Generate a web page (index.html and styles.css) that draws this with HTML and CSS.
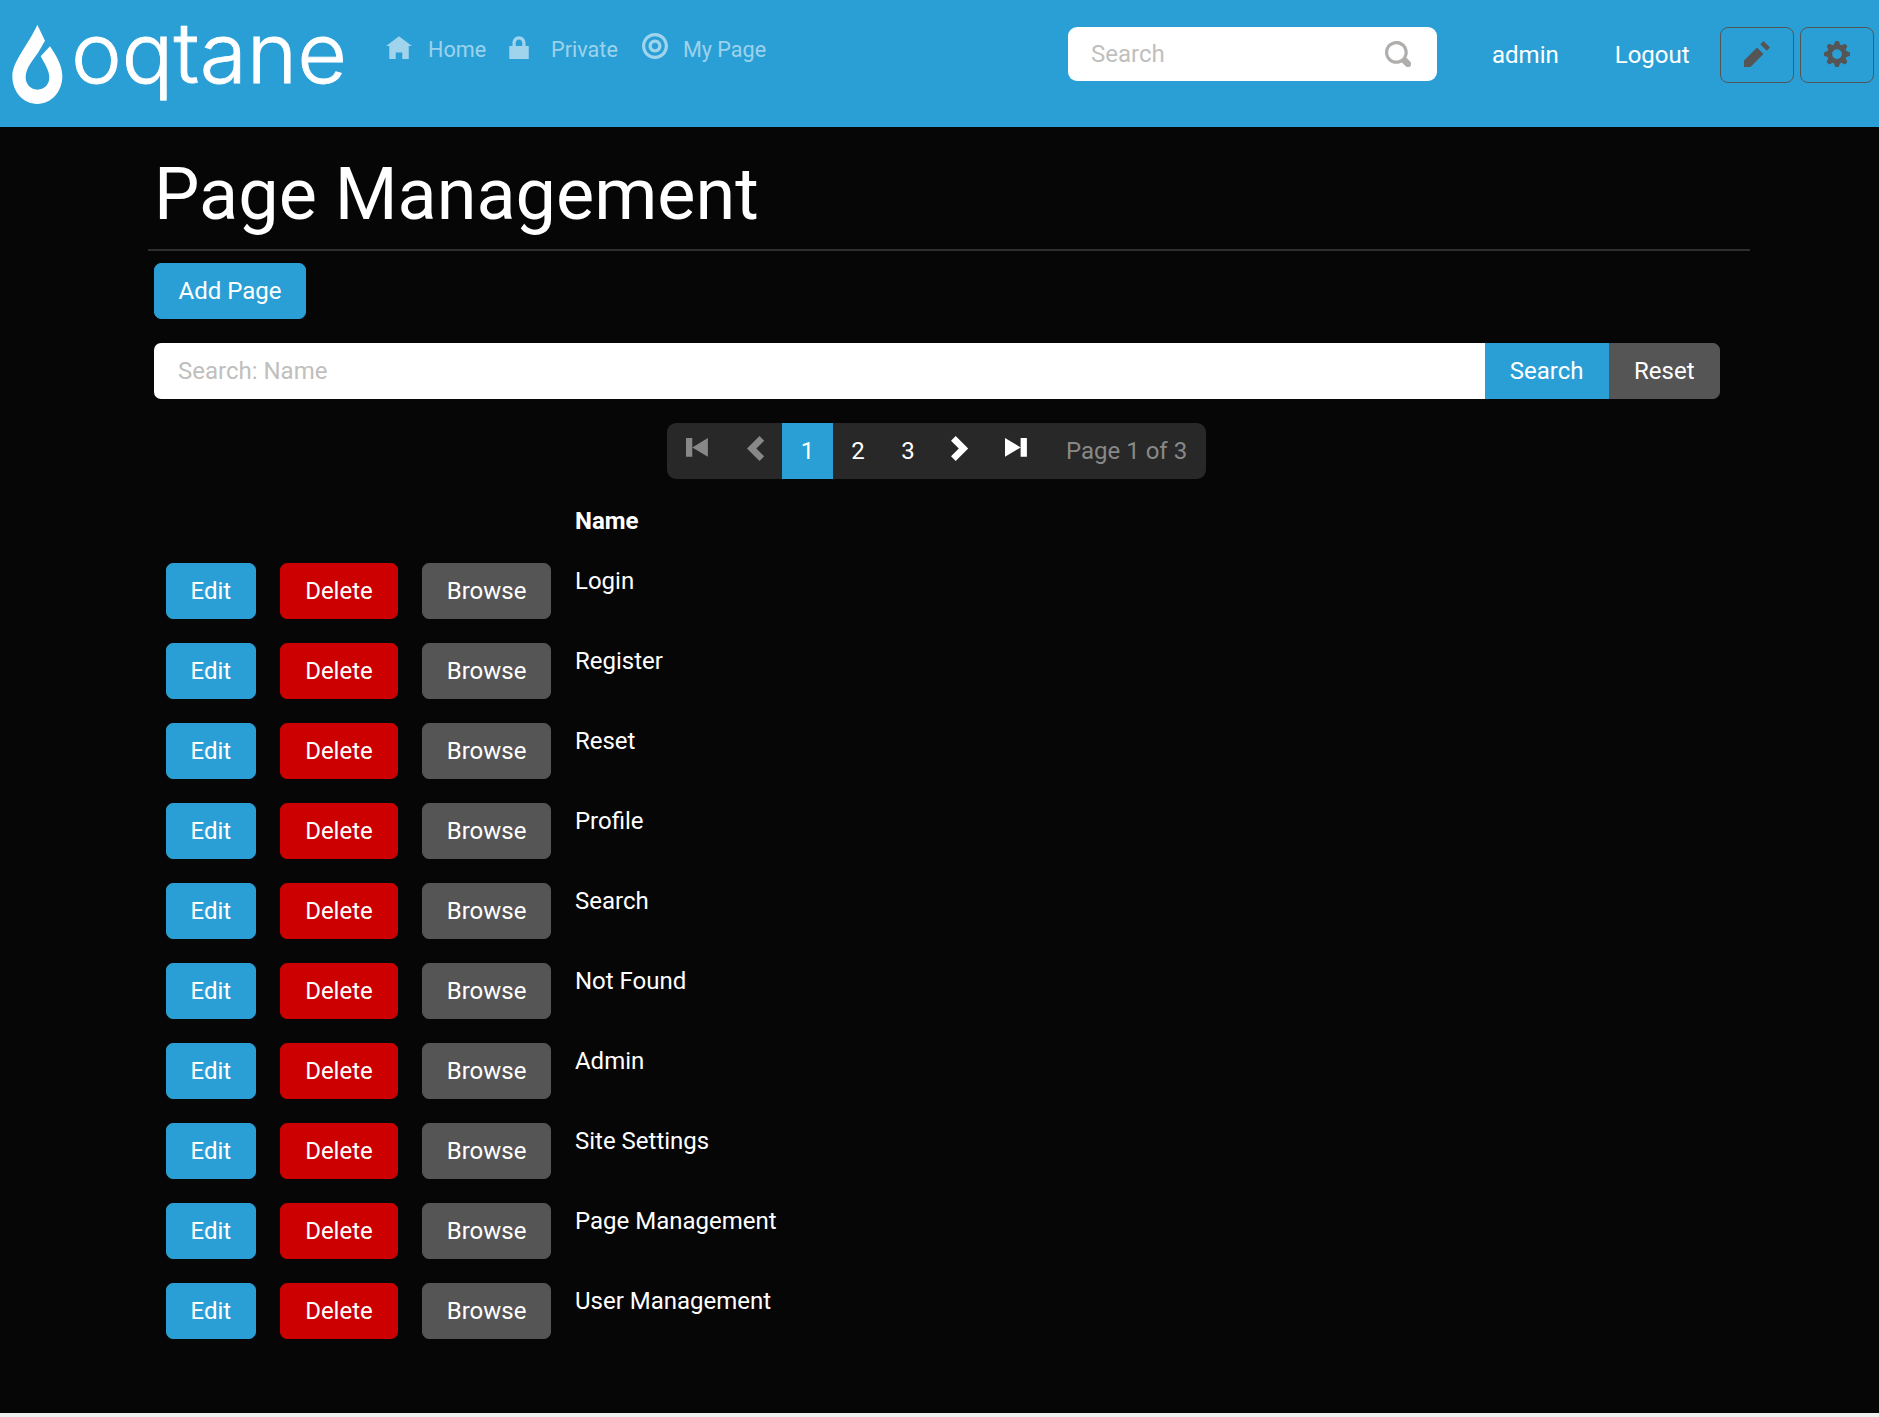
FILE: index.html
```html
<!DOCTYPE html>
<html>
<head>
    <meta name="viewport" content="width=device-width, initial-scale=1.0">
    <title>Page Management</title>
    <link rel="stylesheet" href="styles.css">
</head>
<body>

    <header class="topbar">
        <a class="brand">
            <svg class="brand-drop" viewBox="0 0 210 270">
                <path fill="#fff" d="M97 20L120 68L100 103C85 125 62 150 62 178C62 200 78 215 97 215C118 215 133 200 133 178C133 158 118 135 107 115L135 85C150 108 172 140 172 175C172 222 138 258 97 258C55 258 22 222 22 175C22 130 70 80 97 20Z"/>
            </svg>
            <svg class="brand-word" viewBox="0 0 315 110">
                <text x="0" y="83" textLength="276" lengthAdjust="spacingAndGlyphs">oqtane</text>
            </svg>
        </a>

        <nav class="mainnav">
            <a class="navlink">
                <svg class="icon" viewBox="0 -1 8 8"><path d="M4 0l-4 3h1v4h2v-2h2v2h2v-4.03l1 .03-4-3z"/></svg>
                <span>Home</span>
            </a>
            <a class="navlink navlink-private">
                <svg class="icon" viewBox="0 -1 8 8"><path transform="translate(1)" d="M3 0c-1.1 0-2 .9-2 2v1h-1v4h6v-4h-1v-1c0-1.1-.9-2-2-2zm0 1c.56 0 1 .44 1 1v1h-2v-1c0-.56.44-1 1-1z"/></svg>
                <span>Private</span>
            </a>
            <a class="navlink navlink-mypage">
                <svg class="icon" viewBox="0 0 8 8"><path d="M4 0c-2.2 0-4 1.8-4 4s1.8 4 4 4 4-1.8 4-4-1.8-4-4-4zm0 1c1.66 0 3 1.34 3 3s-1.34 3-3 3-3-1.34-3-3 1.34-3 3-3zm0 1c-1.1 0-2 .9-2 2s.9 2 2 2 2-.9 2-2-.9-2-2-2zm0 1c.56 0 1 .44 1 1s-.44 1-1 1-1-.44-1-1 .44-1 1-1z"/></svg>
                <span>My Page</span>
            </a>
        </nav>

        <div class="topsearch">
            <input class="topsearch-input" type="text" placeholder="Search">
            <svg class="topsearch-icon" viewBox="0 0 8 8"><path d="M3.5 0c-1.93 0-3.5 1.57-3.5 3.5s1.57 3.5 3.5 3.5c.59 0 1.17-.14 1.66-.41a1 1 0 0 0 .13.13l1 1a1.02 1.02 0 1 0 1.44-1.44l-1-1a1 1 0 0 0-.16-.13c.27-.49.44-1.06.44-1.66 0-1.93-1.57-3.5-3.5-3.5zm0 1c1.39 0 2.5 1.11 2.5 2.5 0 .66-.24 1.27-.66 1.72-.01.01-.02.02-.03.03a1 1 0 0 0-.13.13c-.44.4-1.04.63-1.69.63-1.39 0-2.5-1.11-2.5-2.5s1.11-2.5 2.5-2.5z"/></svg>
        </div>

        <a class="userlink user-admin">admin</a>
        <a class="userlink user-logout">Logout</a>

        <button class="toolbtn">
            <svg class="icon" viewBox="0 0 8 8"><path d="M6 0l-1 1 2 2 1-1-2-2zm-2 2l-4 4v2h2l4-4-2-2z"/></svg>
        </button>
        <button class="toolbtn">
            <svg class="icon" viewBox="0 0 8 8"><path d="M3.5 0l-.5 1.19c-.1.03-.19.08-.28.13l-1.19-.5-.72.72.5 1.19c-.05.1-.09.18-.13.28l-1.19.5v1l1.19.5c.04.1.08.18.13.28l-.5 1.19.72.72 1.19-.5c.09.04.18.09.28.13l.5 1.19h1l.5-1.19c.09-.04.19-.08.28-.13l1.19.5.72-.72-.5-1.19c.04-.09.09-.19.13-.28l1.19-.5v-1l-1.19-.5c-.03-.09-.08-.19-.13-.28l.5-1.19-.72-.72-1.19.5c-.09-.04-.19-.09-.28-.13l-.5-1.19h-1zm.5 2.5c.83 0 1.5.67 1.5 1.5s-.67 1.5-1.5 1.5-1.5-.67-1.5-1.5.67-1.5 1.5-1.5z"/></svg>
        </button>
    </header>

    <main class="content">
        <h1 class="pagetitle">Page Management</h1>
        <hr class="titlerule">

        <div class="inner">
            <button class="btn btn-primary">Add Page</button>

            <div class="searchgroup">
                <input class="searchgroup-input" type="text" placeholder="Search: Name">
                <button class="btn btn-primary btn-joined">Search</button>
                <button class="btn btn-secondary btn-joined btn-last">Reset</button>
            </div>

            <div class="pagerwrap">
                <ul class="pager">
                    <li class="pageitem page-first disabled"><svg class="icon" viewBox="0 0 8 8"><path d="M0 0v6h2v-6h-2zm2 3l5 3v-6l-5 3z"/></svg></li>
                    <li class="pageitem page-prev disabled"><svg class="icon" viewBox="0 0 8 8"><path d="M4 0l-4 4 4 4 1.5-1.5-2.5-2.5 2.5-2.5-1.5-1.5z"/></svg></li>
                    <li class="pageitem number active">1</li>
                    <li class="pageitem number">2</li>
                    <li class="pageitem number">3</li>
                    <li class="pageitem page-next"><svg class="icon" viewBox="0 0 8 8"><path d="M1.5 0l-1.5 1.5 2.5 2.5-2.5 2.5 1.5 1.5 4-4-4-4z"/></svg></li>
                    <li class="pageitem page-last"><svg class="icon" viewBox="0 0 8 8"><path d="M0 0v6l5-3-5-3zm5 3v3h2v-6h-2v3z"/></svg></li>
                    <li class="pageitem pagecount">Page 1 of 3</li>
                </ul>
            </div>

            <table class="pagestable">
                <thead>
                    <tr>
                        <th></th>
                        <th></th>
                        <th></th>
                        <th class="namecol">Name</th>
                    </tr>
                </thead>
                <tbody>
                    <tr>
                        <td><button class="btn btn-primary">Edit</button></td>
                        <td><button class="btn btn-danger">Delete</button></td>
                        <td><button class="btn btn-secondary">Browse</button></td>
                        <td class="namecol">Login</td>
                    </tr>
                    <tr>
                        <td><button class="btn btn-primary">Edit</button></td>
                        <td><button class="btn btn-danger">Delete</button></td>
                        <td><button class="btn btn-secondary">Browse</button></td>
                        <td class="namecol">Register</td>
                    </tr>
                    <tr>
                        <td><button class="btn btn-primary">Edit</button></td>
                        <td><button class="btn btn-danger">Delete</button></td>
                        <td><button class="btn btn-secondary">Browse</button></td>
                        <td class="namecol">Reset</td>
                    </tr>
                    <tr>
                        <td><button class="btn btn-primary">Edit</button></td>
                        <td><button class="btn btn-danger">Delete</button></td>
                        <td><button class="btn btn-secondary">Browse</button></td>
                        <td class="namecol">Profile</td>
                    </tr>
                    <tr>
                        <td><button class="btn btn-primary">Edit</button></td>
                        <td><button class="btn btn-danger">Delete</button></td>
                        <td><button class="btn btn-secondary">Browse</button></td>
                        <td class="namecol">Search</td>
                    </tr>
                    <tr>
                        <td><button class="btn btn-primary">Edit</button></td>
                        <td><button class="btn btn-danger">Delete</button></td>
                        <td><button class="btn btn-secondary">Browse</button></td>
                        <td class="namecol">Not Found</td>
                    </tr>
                    <tr>
                        <td><button class="btn btn-primary">Edit</button></td>
                        <td><button class="btn btn-danger">Delete</button></td>
                        <td><button class="btn btn-secondary">Browse</button></td>
                        <td class="namecol">Admin</td>
                    </tr>
                    <tr>
                        <td><button class="btn btn-primary">Edit</button></td>
                        <td><button class="btn btn-danger">Delete</button></td>
                        <td><button class="btn btn-secondary">Browse</button></td>
                        <td class="namecol">Site Settings</td>
                    </tr>
                    <tr>
                        <td><button class="btn btn-primary">Edit</button></td>
                        <td><button class="btn btn-danger">Delete</button></td>
                        <td><button class="btn btn-secondary">Browse</button></td>
                        <td class="namecol">Page Management</td>
                    </tr>
                    <tr>
                        <td><button class="btn btn-primary">Edit</button></td>
                        <td><button class="btn btn-danger">Delete</button></td>
                        <td><button class="btn btn-secondary">Browse</button></td>
                        <td class="namecol">User Management</td>
                    </tr>
                </tbody>
            </table>
        </div>
    </main>

</body>
</html>
```
FILE: styles.css
```css
* {
    box-sizing: border-box;
}

html {
    background: #f0f0f0;
}

body {
    margin: 0;
    font-family: Roboto, "Liberation Sans", sans-serif;
    font-size: 24px;
    line-height: 36px;
    color: #fff;
}

/* top bar */

.topbar {
    display: flex;
    align-items: flex-start;
    height: 127px;
    background: #2a9fd6;
}

.brand {
    display: flex;
    align-items: flex-start;
    width: 386px;
    flex: none;
}

.brand-drop {
    width: 70px;
    height: 90px;
    margin: 18px 0 0 5px;
    flex: none;
}

.brand-word {
    width: 315px;
    height: 110px;
    margin-left: -4px;
    flex: none;
}

.brand-word text {
    font-family: Inter, "Noto Sans", sans-serif;
    font-size: 84px;
    font-weight: 300;
    fill: #fff;
    stroke: #fff;
    stroke-width: 0.8px;
}

.mainnav {
    display: flex;
    width: 682px;
    flex: none;
}

.navlink {
    display: flex;
    align-items: flex-start;
    gap: 16px;
    margin: 33px 20px 0 0;
    font-size: 21.6px;
    line-height: 34px;
    color: rgba(255, 255, 255, 0.55);
}

.navlink-private {
    gap: 19px;
    margin-right: 24px;
}

.navlink-mypage {
    gap: 15px;
}

.icon {
    width: 26px;
    height: 26px;
    fill: currentColor;
    flex: none;
}

.topsearch {
    display: flex;
    align-items: center;
    width: 369px;
    height: 54px;
    margin-top: 27px;
    padding: 0 26px 0 23px;
    background: #fff;
    border-radius: 9px;
    flex: none;
}

.topsearch-input {
    flex: 1;
    min-width: 0;
    border: 0;
    outline: 0;
    padding: 0;
    font: inherit;
    background: transparent;
}

.topsearch-input::placeholder,
.searchgroup-input::placeholder {
    color: #c0bfbd;
    opacity: 1;
}

.topsearch-icon {
    width: 26px;
    height: 26px;
    fill: #b0aeac;
    flex: none;
}

.userlink {
    margin-top: 37px;
    flex: none;
}

.user-admin {
    margin-left: 55px;
}

.user-logout {
    margin-left: 56px;
}

.toolbtn {
    display: flex;
    align-items: center;
    justify-content: center;
    width: 74px;
    height: 56px;
    margin: 27px 0 0 6px;
    padding: 0 0 2px;
    background: transparent;
    border: 1px solid #555;
    border-radius: 8px;
    color: #555;
    flex: none;
}

.user-logout + .toolbtn {
    margin-left: 30px;
}

/* page body */

.content {
    height: 1286px;
    padding: 25px 129px 0 148px;
    background: #060606;
}

.pagetitle {
    margin: 0 0 11px 6px;
    font-size: 72px;
    line-height: 86px;
    font-weight: 400;
}

.titlerule {
    margin: 0 0 12px;
    border: 0;
    border-top: 2px solid #2e2e2e;
}

.inner {
    padding: 0 30px 0 6px;
}

.btn {
    height: 56px;
    padding: 9px 24px;
    border: 1px solid transparent;
    border-radius: 7px;
    font: inherit;
    color: #fff;
    white-space: nowrap;
}

.btn-primary {
    padding: 9px 23.5px;
    background: #2a9fd6;
    border-color: #2a9fd6;
}

.btn-danger {
    padding: 9px 24.5px;
    background: #c00;
    border-color: #c00;
}

.btn-secondary {
    padding: 9px 23.5px;
    background: #555;
    border-color: #555;
}

.searchgroup {
    display: flex;
    margin-top: 24px;
}

.searchgroup-input {
    flex: 1;
    min-width: 0;
    height: 56px;
    padding: 9px 24px;
    border: 0;
    outline: 0;
    border-radius: 7px 0 0 7px;
    font: inherit;
    background: #fff;
}

.btn-joined {
    padding: 9px 24px;
    border-radius: 0;
}

.btn-last {
    padding: 9px 24.5px;
    border-radius: 0 7px 7px 0;
}

.pagerwrap {
    display: flex;
    margin-top: 24px;
    padding-left: 513px;
}

.pager {
    display: flex;
    height: 56px;
    margin: 0;
    padding: 0;
    list-style: none;
    background: #282828;
    border-radius: 9px;
    overflow: hidden;
}

.pageitem {
    display: flex;
    align-items: flex-start;
    flex: none;
    color: #fff;
}

.pageitem .icon {
    width: 25px;
    height: 25px;
}

.page-first {
    width: 57px;
    padding: 15px 0 0 19px;
}

.page-prev {
    width: 58px;
    padding: 13px 0 0 23px;
}

.page-next {
    width: 54px;
    padding: 13px 0 0 18px;
}

.page-last {
    width: 61px;
    padding: 15px 0 0 18px;
}

.pageitem.disabled,
.pagecount {
    color: #888;
}

.pageitem.number {
    justify-content: center;
    width: 50px;
    padding-top: 10px;
}

.pageitem.active {
    width: 51px;
    background: #2a9fd6;
}

.pagecount {
    padding: 10px 19px 0 18px;
}

.pagestable {
    margin-top: 12px;
    border-collapse: collapse;
}

.pagestable th,
.pagestable td {
    padding: 12px;
    vertical-align: top;
    text-align: left;
    font-weight: 400;
}

.pagestable th.namecol {
    font-weight: 700;
}

.pagestable button {
    display: block;
}
```
